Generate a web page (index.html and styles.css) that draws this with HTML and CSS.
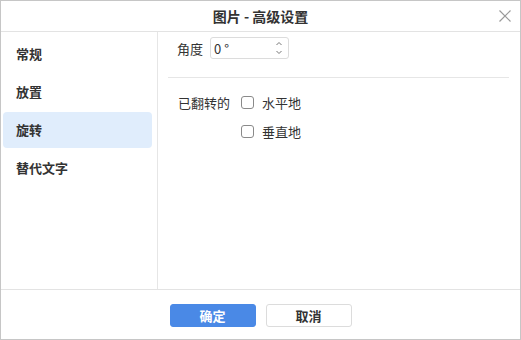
FILE: index.html
```html
<!DOCTYPE html>
<html lang="zh-CN">
<head>
    <meta charset="UTF-8">
    <title>图片 - 高级设置</title>
    <link rel="stylesheet" href="styles.css">
</head>
<body>
    <div class="dialog">
        <div class="header">
            <span class="title">图片 - 高级设置</span>
            <button class="close" aria-label="关闭">
                <svg width="12" height="12" viewBox="0 0 12 12">
                    <path d="M0.5 0.5 L11.5 11.5 M11.5 0.5 L0.5 11.5" stroke="#9a9a9a" stroke-width="1.2" fill="none"/>
                </svg>
            </button>
        </div>

        <div class="main">
            <!-- Sidebar -->
            <ul class="sidebar">
                <li>常规</li>
                <li>放置</li>
                <li class="active">旋转</li>
                <li>替代文字</li>
            </ul>

            <!-- Content -->
            <div class="content">
                <div class="row angle-row">
                    <label class="label" for="angle">角度</label>
                    <div class="spin">
                        <input id="angle" type="text" value="0 °">
                        <span class="arrows">
                            <svg width="8" height="16" viewBox="0 0 8 16">
                                <path d="M1.5 5 L4 2.5 L6.5 5 M1.5 11 L4 13.5 L6.5 11" stroke="#777" stroke-width="1" fill="none"/>
                            </svg>
                        </span>
                    </div>
                </div>

                <hr class="sep">

                <div class="flip">
                    <span class="label">已翻转的</span>
                    <div class="checks">
                        <label class="check"><span class="box"></span>水平地</label>
                        <label class="check"><span class="box"></span>垂直地</label>
                    </div>
                </div>
            </div>
        </div>

        <div class="footer">
            <button class="btn primary">确定</button>
            <button class="btn">取消</button>
        </div>
    </div>
</body>
</html>
```

FILE: styles.css
```css
* {
    box-sizing: border-box;
    margin: 0;
    padding: 0;
    font-family: "Noto Sans CJK SC", "Noto Sans", sans-serif;
}

body {
    background-color: #ffffff;
    color: #333;
}

.dialog {
    width: 521px;
    height: 340px;
    border: 1px solid #c6c6c6;
    display: flex;
    flex-direction: column;
    background-color: #fff;
}

.header {
    position: relative;
    height: 31px;
    border-bottom: 1px solid #e3e3e3;
    display: flex;
    justify-content: center;
    align-items: center;
}

.title {
    font-size: 14px;
    font-weight: bold;
    color: #333;
}

.close {
    position: absolute;
    right: 9px;
    top: 9px;
    border: none;
    background: none;
    width: 12px;
    height: 12px;
    display: flex;
}

.main {
    flex: 1;
    display: flex;
}

.sidebar {
    list-style: none;
    width: 157px;
    border-right: 1px solid #e6e6e6;
    padding: 4px 5px 0 2px;
    display: flex;
    flex-direction: column;
    gap: 2px;
}

.sidebar li {
    height: 36px;
    line-height: 36px;
    padding-left: 13px;
    font-size: 13px;
    font-weight: bold;
    color: #333;
    border-radius: 4px;
}

.sidebar li.active {
    background-color: #e0edfc;
}

.content {
    flex: 1;
    padding: 5px 11px 0 10px;
}

.row {
    display: flex;
    align-items: center;
}

.label {
    font-size: 13px;
    color: #333;
}

.angle-row {
    padding-left: 9px;
    gap: 7px;
}

.spin {
    width: 79px;
    height: 22px;
    border: 1px solid #dcdcdc;
    border-radius: 3px;
    display: flex;
    align-items: center;
    padding: 0 5px 0 3px;
}

.spin input {
    flex: 1;
    width: 0;
    border: none;
    outline: none;
    font-size: 13px;
    color: #333;
    background: none;
}

.arrows {
    display: flex;
}

.sep {
    border: none;
    border-top: 1px solid #e6e6e6;
    margin-top: 18px;
}

.flip {
    display: flex;
    padding: 14px 0 0 10px;
}

.flip .label {
    width: 63px;
    line-height: 21px;
}

.checks {
    display: flex;
    flex-direction: column;
    gap: 8px;
}

.check {
    display: flex;
    align-items: center;
    gap: 8px;
    font-size: 13px;
    height: 21px;
}

.box {
    width: 13px;
    height: 13px;
    border: 1px solid #8a8a8a;
    border-radius: 3px;
}

.footer {
    height: 50px;
    border-top: 1px solid #e3e3e3;
    display: flex;
    justify-content: center;
    align-items: flex-start;
    gap: 10px;
    padding-top: 14px;
}

.btn {
    width: 86px;
    height: 23px;
    border: 1px solid #dcdcdc;
    border-radius: 3px;
    background-color: #fff;
    font-size: 13px;
    font-weight: bold;
    color: #333;
}

.btn.primary {
    background-color: #4a89e6;
    border-color: #4a89e6;
    color: #fff;
}
```
